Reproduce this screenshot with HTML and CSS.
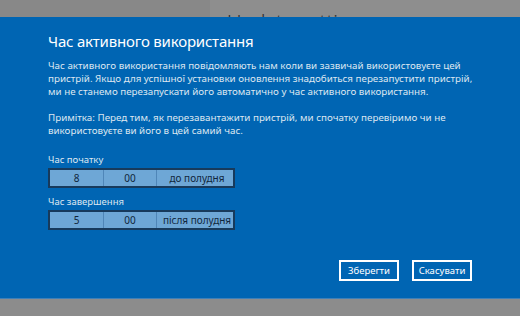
FILE: index.html
```html
<!DOCTYPE html>
<html lang="uk">
<head>
    <meta charset="UTF-8">
    <title>Час активного використання</title>
    <link rel="stylesheet" href="styles.css">
</head>
<body>
    <div class="backdrop-top">
        <div class="nav-pane"></div>
        <div class="content-pane">
            <h1 class="page-title">Update settings</h1>
        </div>
    </div>

    <div class="dialog">
        <h2 class="dialog-title">Час активного використання</h2>
        <p class="text">Час активного використання повідомляють нам коли ви зазвичай використовуєте цей пристрій. Якщо для успішної установки оновлення знадобиться перезапустити пристрій, ми не станемо перезапускати його автоматично у час активного використання.</p>
        <p class="text note">Примітка: Перед тим, як перезавантажити пристрій, ми спочатку перевіримо чи не використовуєте ви його в цей самий час.</p>

        <div class="field">
            <label class="field-label">Час початку</label>
            <div class="time-picker">
                <span class="cell hour">8</span>
                <span class="cell minute">00</span>
                <span class="cell period">до полудня</span>
            </div>
        </div>

        <div class="field">
            <label class="field-label">Час завершення</label>
            <div class="time-picker">
                <span class="cell hour">5</span>
                <span class="cell minute">00</span>
                <span class="cell period">після полудня</span>
            </div>
        </div>

        <div class="actions">
            <button type="button">Зберегти</button>
            <button type="button">Скасувати</button>
        </div>
    </div>

    <div class="backdrop-bottom"></div>
</body>
</html>
```

FILE: styles.css
```css
html, body {
    margin: 0;
    height: 100%;
    background: #8c8c8c;
    font-family: "Noto Sans", "Open Sans", sans-serif;
    overflow: hidden;
}
.backdrop-top {
    display: flex;
    height: 17px;
    overflow: hidden;
}
.nav-pane {
    width: 210px;
    background: #888888;
}
.content-pane {
    flex: 1;
    background: #8e8e8e;
    padding-left: 17px;
}
.page-title {
    margin: 10px 0 0;
    font-size: 20px;
    font-weight: 300;
    color: #2b2b2b;
    line-height: 24px;
}
.dialog {
    height: 282px;
    box-sizing: border-box;
    background: #0065b3;
    border-bottom: 1px solid #3f80b8;
    padding: 14px 20px 0 48px;
    color: #ffffff;
}
.dialog-title {
    margin: 0 0 8px;
    font-size: 15px;
    font-weight: 400;
    letter-spacing: -0.2px;
    line-height: 20px;
}
.text {
    margin: 0 0 13px;
    max-width: 436px;
    font-size: 9.8px;
    line-height: 13px;
    color: #dde7f1;
}
.text.note {
    margin-bottom: 16px;
}
.field {
    display: flex;
    flex-direction: column;
    gap: 2px;
    margin-bottom: 7px;
}
.field-label {
    font-size: 9.5px;
    line-height: 13px;
    color: #dde7f1;
}
.time-picker {
    display: grid;
    grid-template-columns: 53px 53px 81px;
    width: 187px;
    height: 20px;
    box-sizing: border-box;
    border: 2px solid #173a5c;
    background: #6ea7d6;
}
.cell {
    display: flex;
    align-items: center;
    justify-content: center;
    font-size: 10px;
    color: #10263c;
    border-left: 1px solid #4f86b8;
}
.cell.hour {
    border-left: none;
}
.actions {
    display: flex;
    justify-content: flex-end;
    gap: 13px;
    margin-top: 30px;
    width: 424px;
}
button {
    width: 60px;
    height: 21px;
    padding: 0;
    background: #0065b3;
    color: #ffffff;
    border: 2px solid #ffffff;
    font-family: inherit;
    font-size: 9.5px;
    cursor: pointer;
}
.backdrop-bottom {
    height: 17px;
    background: #8c8c8c;
}
```
